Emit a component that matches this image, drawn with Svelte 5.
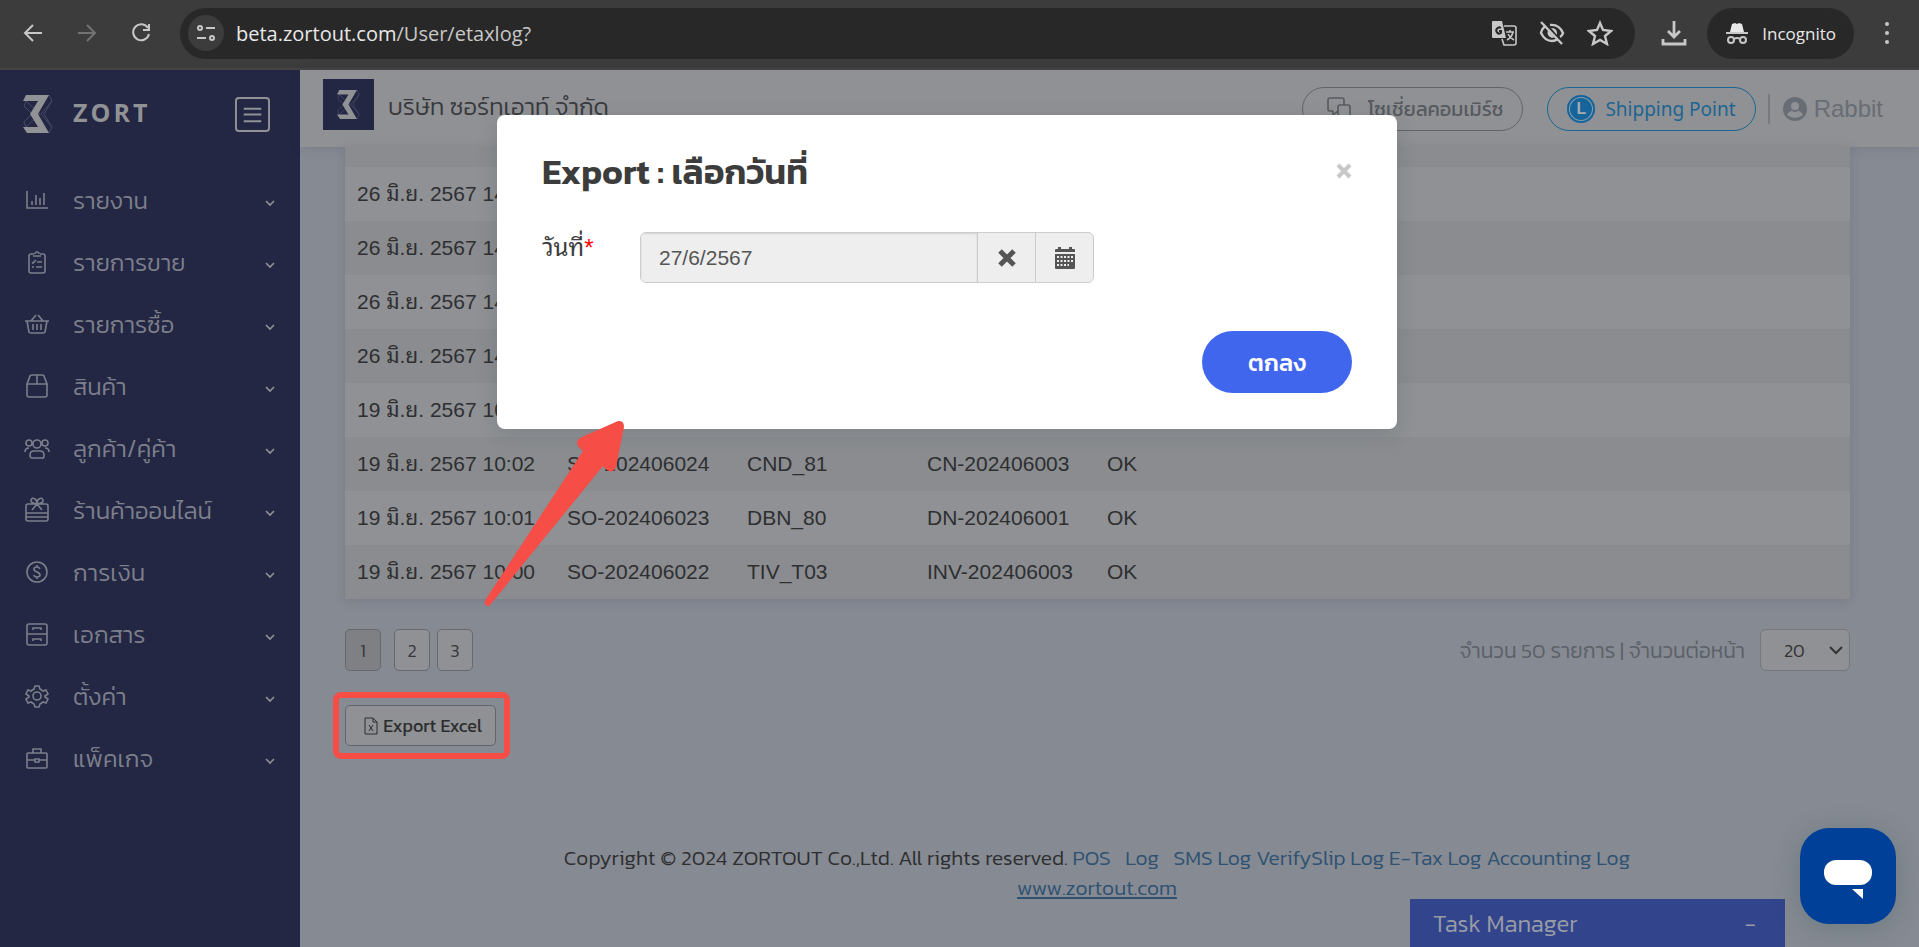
<script lang="ts">
  const menu = [
    { name: 'รายงาน', icon: 'M3 4v17h21M8 14v4M12 8v10M16 11v7M20 6v12' },
    { name: 'รายการขาย', icon: 'M10 5H7a2 2 0 0 0-2 2v15a2 2 0 0 0 2 2h12a2 2 0 0 0 2-2V7a2 2 0 0 0-2-2h-3M9 7h8M11 5a2 2 0 0 1 4 0M8 13l1 1 3-3M13 13h5M8 18h2M12 18h6' },
    { name: 'รายการซื้อ', icon: 'M1 10h24M3 10l2 11q0 1 2 1h12q2 0 2-1l2-11M7 10l5-6M19 10l-5-6M9 13v6M13 13v6M17 13v6' },
    { name: 'สินค้า', icon: 'M3 11v11a2 2 0 0 0 2 2h16a2 2 0 0 0 2-2V11M3 11l3-8q0-1 2-1h10q2 0 2 1l3 8zM13 2v9' },
    { name: 'ลูกค้า/คู่ค้า', icon: 'M9 9a4 4 0 1 0 8 0a4 4 0 1 0-8 0M2 8a3 3 0 1 0 6 0a3 3 0 1 0-6 0M18 8a3 3 0 1 0 6 0a3 3 0 1 0-6 0M6 20q0-4 4-4h6q4 0 4 4t-2 3H8q-2 0-2-3M1 17q0-4 4-4M25 17q0-4-4-4' },
    { name: 'ร้านค้าออนไลน์', icon: 'M2 9a2 2 0 0 1 2-2h18a2 2 0 0 1 2 2v13a2 2 0 0 1-2 2H4a2 2 0 0 1-2-2zM2 16h22M2 20h22M13 7q-7-1-6-4t4-1q2 1 2 5zM13 7q7-1 6-4t-4-1q-2 1-2 5zM8 13l5-6 5 6' },
    { name: 'การเงิน', icon: 'M3 13a10 10 0 1 0 20 0a10 10 0 1 0-20 0M16 10q-1-2-3-2-3 0-3 2t3 3 3 3-3 2q-3 0-3-2M13 6v2M13 18v2' },
    { name: 'เอกสาร', icon: 'M5 3h16a2 2 0 0 1 2 2v17a2 2 0 0 1-2 2H5a2 2 0 0 1-2-2V5a2 2 0 0 1 2-2zM3 13h20M9 9V7h8v2M9 20v-2h8v2' },
    { name: 'ตั้งค่า', icon: 'M11 3h4l1 3 3 2 3-1 2 4-3 2v1l3 2-2 4-3-1-3 2-1 3h-4l-1-3-3-2-3 1-2-4 3-2v-1l-3-2 2-4 3 1 3-2zM9 13a4 4 0 1 0 8 0a4 4 0 1 0-8 0' },
    { name: 'แพ็คเกจ', icon: 'M4 8h18q1 0 1 1v13q0 1-1 1H4q-1 0-1-1V9q0-1 1-1zM9 8V4h8v4M3 15h8M15 15h8M11 14h4v3h-4z' },
  ];

  const rows = [
    ['26 มิ.ย. 2567 14', '', '', '', ''],
    ['26 มิ.ย. 2567 14', '', '', '', ''],
    ['26 มิ.ย. 2567 14', '', '', '', ''],
    ['26 มิ.ย. 2567 14', '', '', '', ''],
    ['19 มิ.ย. 2567 10', '', '', '', ''],
    ['19 มิ.ย. 2567 10:02', 'SO-202406024', 'CND_81', 'CN-202406003', 'OK'],
    ['19 มิ.ย. 2567 10:01', 'SO-202406023', 'DBN_80', 'DN-202406001', 'OK'],
    ['19 มิ.ย. 2567 10:00', 'SO-202406022', 'TIV_T03', 'INV-202406003', 'OK'],
  ];

  let page = $state(1);
  let perPage = $state('20');
  let date = $state('27/6/2567');
  let showExport = $state(true);
</script>

{#snippet logo()}
  <svg class="logo" viewBox="0 0 30 38" aria-hidden="true">
    <path d="M26 0l3 6-8 13 8 13-3 6M17 19L3 6M17 19L3 32M29 6L18 19l11 13M3 6l-2 5 8 8-8 8 2 5" fill="none" stroke="#464a65" stroke-width="1" />
    <path d="M3 0H26L15 19 26 38H4L0 32H15L7 19 15 6H0z" fill="#919295" />
  </svg>
{/snippet}

<div class="browser">
  <button class="nav" aria-label="Back"><svg viewBox="0 0 20 20"><path d="M19 10H2M10 2l-8 8 8 8" /></svg></button>
  <button class="nav off" aria-label="Forward"><svg viewBox="0 0 20 20"><path d="M1 10h17M10 2l8 8-8 8" /></svg></button>
  <button class="nav" aria-label="Reload"><svg viewBox="0 0 20 20"><path d="M17 5a8 8 0 1 0 1 6M18 1v6h-6" /></svg></button>
  <div class="address">
    <button class="site" aria-label="Site information">
      <svg viewBox="0 0 20 20"><circle cx="4" cy="5" r="2" /><path d="M10 5h9M1 15h9" /><circle cx="16" cy="15" r="2" /></svg>
    </button>
    <span class="url">beta.zortout.com<span>/User/etaxlog?</span></span>
    <button class="tool" aria-label="Translate">
      <svg viewBox="0 0 26 26"><path d="M2 1h9l4 17H2q-1 0-1-1V2q0-1 1-1z" fill="#c7c7c7" stroke="none" /><path d="M10 8a3 3 0 1 0 0 5v-2H8" stroke="#282828" /><path d="M13 6h10q2 0 2 2v15q0 2-2 2H13l-2-6M15 12h8M19 10v2M22 12q-1 5-6 8M17 14q2 4 6 6" stroke-width="1.6" /></svg>
    </button>
    <button class="tool" aria-label="Tracking protection">
      <svg viewBox="0 0 26 26"><path d="M7 6q-4 2-5 7 4 8 11 8 3 0 6-2M11 5q9-1 13 8-1 3-3 4M2 2l21 22" stroke-width="2.4" /><path d="M9 10q-2 6 4 8l3-1zM12 8q6 0 6 5v2z" fill="#c7c7c7" stroke="none" /></svg>
    </button>
    <button class="tool" aria-label="Bookmark">
      <svg viewBox="0 0 26 26"><path d="M13 3l3 7 8 1-6 5 2 8-7-4-7 4 2-8-6-5 8-1z" stroke-width="2.4" /></svg>
    </button>
  </div>
  <button class="tool download" aria-label="Downloads">
    <svg viewBox="0 0 26 26"><path d="M13 1v15M7 11l6 6 6-6M2 19v5h22v-5" stroke-width="2.8" /></svg>
  </button>
  <button class="incognito">
    <svg viewBox="0 0 24 24"><path d="M7 3l3-1 2 1 2-1 3 1 2 8H5z" fill="#e8e8e8" stroke="none" /><path d="M1 12h22M9 18q3-2 6 0" /><circle cx="6" cy="19" r="3" /><circle cx="18" cy="19" r="3" /></svg>
    Incognito
  </button>
  <button class="dots" aria-label="Menu"><svg viewBox="0 0 6 26"><circle cx="3" cy="4" r="2" /><circle cx="3" cy="13" r="2" /><circle cx="3" cy="22" r="2" /></svg></button>
</div>

<div class="app">
  <aside>
    <div class="brand">
      {@render logo()}
      <strong>ZORT</strong>
      <button aria-label="เมนู"><svg viewBox="0 0 36 36"><rect x="1" y="1" width="34" height="34" rx="3" /><path d="M9 12h18M9 18h18M9 25h18" /></svg></button>
    </div>
    <nav>
      {#each menu as item}
        <a href="#menu">
          <svg class="icon" viewBox="0 0 26 26"><path d={item.icon} /></svg>
          <span>{item.name}</span>
          <svg class="chevron" viewBox="0 0 10 10"><path d="M1 3l4 4 4-4" /></svg>
        </a>
      {/each}
    </nav>
  </aside>

  <div class="content">
    <header>
      <div class="company-logo">{@render logo()}</div>
      <span class="company">บริษัท ซอร์ทเอาท์ จำกัด</span>
      <a class="pill social" href="#social">
        <svg viewBox="0 0 24 24"><path d="M6 14H3q-2 0-2-2V3q0-2 2-2h12q2 0 2 2v5M6 14v4l5-4M11 14V10q0-2 2-2h8q2 0 2 2v7q0 2-2 2v4l-4-4h-4q-2 0-2-2z" /></svg>
        โซเชี่ยลคอมเมิร์ซ
      </a>
      <a class="pill shipping" href="#shipping"><span class="badge">L</span>Shipping Point</a>
      <a class="user" href="#user">
        <svg viewBox="0 0 24 24"><circle cx="12" cy="12" r="12" /><circle class="face" cx="12" cy="9" r="4" /><path class="face" d="M4 18q2-4 5-4 3 2 6 0 3 0 5 4-8 6-16 0" /></svg>
        Rabbit
      </a>
    </header>

    <main>
      <table>
        <tbody>
          {#each rows as row}
            <tr>
              {#each row as cell}<td>{cell}</td>{/each}
            </tr>
          {/each}
        </tbody>
      </table>

      <div class="paging">
        <div class="pages">
          {#each [1, 2, 3] as n}
            <button class:active={page === n} onclick={() => (page = n)}>{n}</button>
          {/each}
        </div>
        <label for="per-page">จำนวน 50 รายการ | จำนวนต่อหน้า</label>
        <div class="select">
          <select id="per-page" bind:value={perPage}>
            <option>20</option>
            <option>50</option>
            <option>100</option>
          </select>
          <svg viewBox="0 0 14 10"><path d="M1 2l6 6 6-6" /></svg>
        </div>
      </div>

      <div class="highlight">
        <button class="export" onclick={() => (showExport = true)}>
          <svg viewBox="0 0 14 18"><path d="M1 1h8l4 4v12H1zM9 1v4h4M5 8l4 6M9 8l-4 6" /></svg>
          Export Excel
        </button>
      </div>
    </main>

    <footer>
      <p>
        Copyright © 2024 ZORTOUT Co.,Ltd. All rights reserved.
        <a href="#pos">POS</a> &nbsp; <a href="#log">Log</a> &nbsp; <a href="#sms">SMS Log</a>
        <a href="#slip">VerifySlip Log</a> <a href="#etax">E-Tax Log</a> <a href="#accounting">Accounting Log</a>
      </p>
      <p><a class="site-link" href="#site">www.zortout.com</a></p>
    </footer>
  </div>

  <button class="tasks"><span>Task Manager</span><span>-</span></button>
</div>

{#if showExport}
  <div class="overlay">
    <div class="modal" role="dialog" aria-labelledby="export-title">
      <div class="modal-head">
        <h2 id="export-title">Export : เลือกวันที่</h2>
        <button class="close" aria-label="ปิด" onclick={() => (showExport = false)}>
          <svg viewBox="0 0 16 16"><path d="M2 2l12 12M14 2L2 14" /></svg>
        </button>
      </div>
      <div class="field">
        <label for="date">วันที่<span>*</span></label>
        <div class="date">
          <input id="date" readonly value={date} />
          <button aria-label="ล้างวันที่" onclick={() => (date = '')}>
            <svg viewBox="0 0 20 20"><path d="M3 3l14 14M17 3L3 17" stroke="#555" stroke-width="5" /></svg>
          </button>
          <button aria-label="เลือกวันที่">
            <svg viewBox="0 0 20 22">
              <path d="M0 3q0-1 1-1h2V0h3v2h8V0h3v2h2q1 0 1 1v2H0zM0 7h20v14q0 1-1 1H1q-1 0-1-1z" fill="#555" />
              <path d="M2 10h16M2 14h16M2 18h12" stroke="#eee" stroke-width="2" stroke-dasharray="2 1.5" />
            </svg>
          </button>
        </div>
      </div>
      <button class="ok" onclick={() => (showExport = false)}>ตกลง</button>
    </div>
  </div>
{/if}

<svg class="arrow" viewBox="0 0 140 190" aria-hidden="true">
  <path d="M134 1Q140 0 140 7L132 47Q129 54 123 50L119 46 6 185Q4 188 1 184 0 182 2 179L99 31 94 26Q91 20 98 17z" />
</svg>

<button class="chat" aria-label="Chat">
  <svg viewBox="0 0 48 40"><rect width="48" height="25" rx="12" /><path d="M28 29h11v10z" /></svg>
</button>

<style>
  :global(body) {
    background: #868a92;
    font-family: Kanit, "Noto Sans", "Noto Sans Thai", sans-serif;
  }

  * { box-sizing: border-box; }
  button, input, select { font: inherit; color: inherit; }
  button { padding: 0; border: none; background: none; cursor: pointer; }
  a { color: inherit; text-decoration: none; }
  svg { display: block; fill: none; flex: none; }

  /* browser bar */
  .browser { display: flex; align-items: center; height: 70px; padding: 0 29px 2px 23px; background: #3c3c3c; border-bottom: 2px solid #454545; }
  .browser svg { stroke: #c7c7c7; stroke-width: 2; }
  .nav { margin-right: 34px; }
  .nav svg { width: 20px; height: 20px; }
  .nav.off { opacity: 0.4; }
  .nav:nth-child(3) { margin-right: 29px; }
  .address { flex: 1; display: flex; align-items: center; height: 51px; padding: 0 22px 0 8px; border-radius: 26px; background: #282828; }
  .site { display: grid; place-items: center; width: 36px; height: 36px; border-radius: 50%; background: #3c3c3c; }
  .site svg { width: 20px; height: 20px; }
  .url { flex: 1; margin-left: 12px; font: 20px "Open Sans", sans-serif; color: #e8e8e8; }
  .url span { color: #c7c7c7; }
  .tool svg { width: 26px; height: 26px; }
  .tool + .tool { margin-left: 22px; }
  .download { margin: 0 20px 0 26px; }
  .incognito { display: flex; align-items: center; gap: 13px; height: 51px; padding: 0 18px; border-radius: 26px; background: #282828; color: #e8e8e8; font: 17px "Open Sans", sans-serif; }
  .incognito svg { width: 24px; height: 24px; }
  .dots { margin-left: 30px; }
  .dots svg { width: 6px; height: 26px; fill: #c7c7c7; stroke: none; }

  .app { position: relative; display: flex; min-height: calc(100vh - 70px); }

  /* sidebar */
  aside { width: 300px; flex: none; background: #232743; color: #7c7f8b; }
  .brand { display: flex; align-items: center; height: 88px; padding: 0 30px 0 23px; }
  .brand strong { flex: 1; margin-left: 20px; padding-bottom: 4px; color: #919295; font: bold 25px "Open Sans", sans-serif; letter-spacing: 3px; }
  .brand .logo { width: 30px; height: 38px; }
  .brand button svg { width: 35px; height: 35px; stroke: #919295; stroke-width: 2; }
  nav { padding-top: 11px; }
  nav a { display: flex; align-items: center; height: 62px; padding: 0 25px 0 24px; font-size: 24px; font-weight: 300; }
  nav span { flex: 1; margin-left: 23px; }
  .icon { width: 26px; height: 26px; stroke: #7c7f8b; stroke-width: 1.6; }
  .chevron { width: 10px; height: 10px; margin-top: 5px; stroke: #919295; stroke-width: 1.6; }

  /* top bar */
  .content { flex: 1; display: flex; flex-direction: column; min-width: 0; }
  header { display: flex; align-items: center; height: 77px; padding: 0 36px 0 23px; background: #909194; box-shadow: 0 2px 10px rgba(40, 50, 90, 0.12); }
  .company-logo { display: grid; place-items: center; width: 51px; height: 51px; margin-bottom: 8px; background: #232743; }
  .company-logo .logo { width: 23px; height: 31px; }
  .company { flex: 1; margin-left: 14px; padding-bottom: 4px; color: #38393c; font-size: 24px; font-weight: 300; }
  .pill { display: flex; align-items: center; height: 44px; border: 1px solid #62666c; border-radius: 22px; color: #565a60; font-size: 20px; }
  .social { gap: 17px; padding: 0 19px 0 24px; }
  .social svg { width: 24px; height: 24px; stroke: #565a60; stroke-width: 1.6; }
  .shipping { gap: 10px; margin-left: 24px; padding: 0 19px; border-color: #1c6592; color: #1c6592; font-family: "Noto Sans", sans-serif; font-size: 19px; }
  .badge { display: grid; place-items: center; width: 28px; height: 28px; border-radius: 50%; background: #16649a; box-shadow: inset 0 0 0 2px #16649a, inset 0 0 0 3px #8a9fae; color: #a5abb1; font: bold 16px "Liberation Sans", sans-serif; }
  .user { display: flex; align-items: center; gap: 7px; height: 30px; margin-left: 12px; padding-left: 13px; border-left: 2px solid #777b81; color: #686d75; font: 24px "Liberation Sans", sans-serif; }
  .user svg { width: 24px; height: 24px; fill: #686d75; }
  .user .face { fill: #909194; }

  /* log table */
  main { flex: 1; padding: 0 69px 0 45px; }
  table { width: 100%; padding-top: 20px; border-spacing: 0; background: #8a8c8f; color: #2e2f31; font: 21px/24px "Liberation Sans", "Noto Sans Thai Looped", Loma, sans-serif; table-layout: fixed; box-shadow: 0 2px 10px rgba(40, 50, 90, 0.15); }
  td { height: 54px; padding: 0 12px; white-space: nowrap; }
  td:first-child { width: 210px; }
  td:nth-child(2), td:nth-child(3), td:nth-child(4) { width: 180px; }
  tr:nth-child(odd) { background: #8f9194; }

  .paging { display: flex; align-items: center; margin-top: 30px; color: #5c6067; font-size: 21px; font-weight: 300; }
  .pages { flex: 1; display: flex; gap: 7px; }
  .pages button { width: 36px; height: 42px; border: 1px solid #666a70; border-radius: 5px; background: #8f9194; color: #37383a; font-size: 18px; }
  .pages .active { margin-right: 6px; background: #7e8084; }
  .select { position: relative; margin-left: 15px; }
  .select select { appearance: none; width: 90px; height: 42px; padding-left: 23px; border: 1px solid #74777b; border-radius: 6px; background: #8f9194; color: #333; font-size: 18px; }
  .select svg { position: absolute; right: 7px; top: 16px; width: 14px; height: 10px; stroke: #333; stroke-width: 2; pointer-events: none; }

  .highlight { width: 177px; margin: 21px 0 0 -12px; padding: 7px 6px; border: 6px solid #f64d47; border-radius: 8px; }
  .export { display: flex; align-items: center; justify-content: flex-end; gap: 5px; width: 151px; height: 41px; padding-right: 13px; border: 1px solid #62666c; border-radius: 5px; background: #8f9194; color: #2c2d2f; font-size: 18px; }
  .export svg { width: 14px; height: 18px; stroke: #2c2d2f; }

  footer { padding-bottom: 44px; padding-right: 25px; text-align: center; color: #2e2f31; font-size: 21px; font-weight: 300; line-height: 30px; }
  footer p { margin: 0; }
  footer a { color: #2f5272; }
  .site-link { text-decoration: underline; }

  .tasks { position: absolute; right: 134px; bottom: 0; display: flex; justify-content: space-between; align-items: center; width: 375px; height: 48px; padding: 0 29px 0 23px; background: #31448c; color: #989ba6; font-size: 24px; font-weight: 300; }

  /* export dialog */
  .overlay { position: absolute; top: 115px; left: 0; right: 25px; display: flex; justify-content: center; }
  .modal { display: flex; flex-direction: column; width: 900px; padding: 32px 45px 36px; border-radius: 8px; background: #fff; box-shadow: 0 5px 20px rgba(30, 50, 60, 0.15); color: #3c3c3c; }
  .modal-head { display: flex; justify-content: space-between; align-items: center; height: 48px; }
  h2 { margin: 0; font-size: 35px; font-weight: 600; }
  .close svg { width: 16px; height: 16px; stroke: #c8c8c8; stroke-width: 4; }
  .field { display: flex; margin-top: 37px; font: 24px/32px "Liberation Sans", "Noto Sans Thai Looped", Loma, sans-serif; }
  .field label { width: 98px; }
  .field label span { color: #f00; }
  .date { display: flex; border: 1px solid #ccc; border-radius: 6px; background: #eee; overflow: hidden; }
  .date input { width: 336px; height: 49px; padding: 0 18px; border: none; outline: none; background: #eee; box-shadow: inset 0 1px 2px rgba(0, 0, 0, 0.12); color: #555; font: 21px "Liberation Sans", sans-serif; }
  .date button { display: grid; place-items: center; width: 58px; border-left: 1px solid #ccc; }
  .date svg { width: 20px; height: 22px; }
  .ok { align-self: flex-end; width: 150px; height: 62px; margin-top: 48px; border-radius: 31px; background: #4166ee; color: #fff; font-size: 24px; font-weight: 500; }

  .arrow { position: absolute; left: 484px; top: 420px; width: 140px; height: 190px; fill: #f64d47; pointer-events: none; }

  .chat { position: fixed; right: 23px; bottom: 23px; display: grid; place-items: center; width: 96px; height: 96px; border-radius: 29px; background: #004099; box-shadow: 0 4px 24px rgba(70, 100, 100, 0.4); }
  .chat svg { width: 48px; height: 40px; margin-top: 8px; fill: #fff; }
</style>
